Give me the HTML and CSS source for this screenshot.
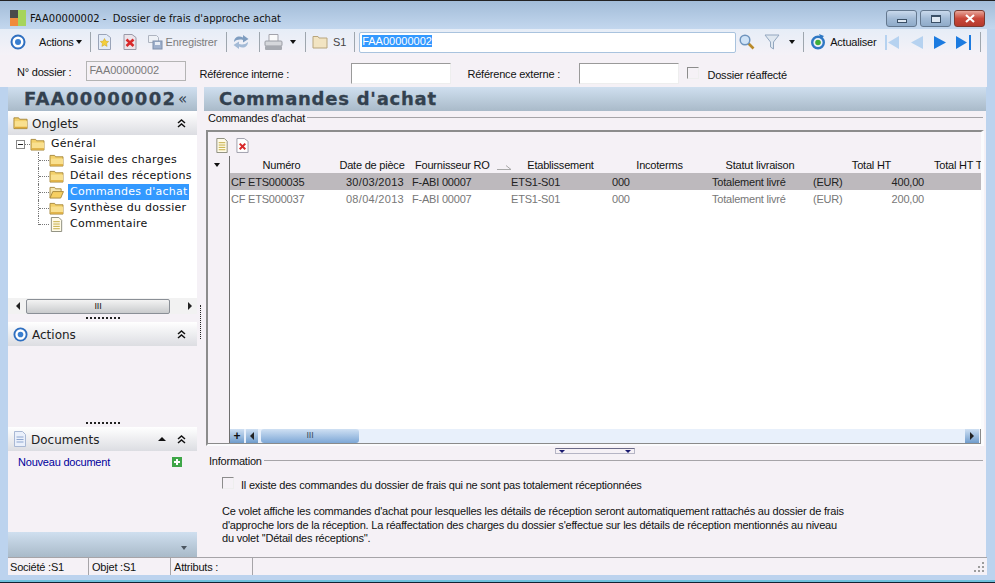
FILE: index.html
```html
<!DOCTYPE html>
<html lang="fr">
<head>
    <meta charset="UTF-8">
    <title>FAA00000002 - Dossier de frais d'approche achat</title>
    <link rel="stylesheet" href="styles.css">
</head>
<body>
    <svg class="defs" width="0" height="0">
        <symbol id="folder" viewBox="0 0 16 14">
            <path d="M1 3V1.500h5L7 3h8v10H1z" fill="#f3d06a" stroke="#a8893c"/>
            <path d="M2 5h13v7H2z" fill="#f9e08f"/>
            <path d="M2 11h13v1.500H2z" fill="#dca93a"/>
        </symbol>
        <symbol id="folder-open" viewBox="0 0 16 14">
            <path d="M1 13V1.500h5L7 3h6v3" fill="#f5e6b0" stroke="#a8893c"/>
            <path d="M1 13l3-7h11.500l-3 7z" fill="#f6cf62" stroke="#a8893c"/>
        </symbol>
        <symbol id="note" viewBox="0 0 14 16">
            <path d="M1.500.5h8l3 3v12h-11z" fill="#fffbe8" stroke="#8a8a7a"/>
            <path d="M3.500 5h7M3.500 7.500h7M3.500 10h7M3.500 12.500h7" stroke="#c2a93c"/>
        </symbol>
        <symbol id="target" viewBox="0 0 16 16">
            <circle cx="8" cy="8" r="6.500" fill="#fff" stroke="#2f6fc0" stroke-width="2"/>
            <circle cx="8" cy="8" r="3" fill="#3a7fd0"/>
        </symbol>
        <symbol id="chevrons" viewBox="0 0 9 9">
            <path d="M1 4l3.500-3L8 4M1 8l3.500-3L8 8" fill="none" stroke="#111" stroke-width="1.500"/>
        </symbol>
        <symbol id="nav-arrow" viewBox="0 0 14 15">
            <path d="M1 1l12 6.500L1 14z"/>
        </symbol>
    </svg>

    <div class="window">
        <div class="titlebar">
            <svg class="app-icon" width="16" height="16" viewBox="0 0 16 16">
                <rect width="8" height="8" fill="#4a4a4a"/>
                <rect x="8" width="8" height="16" fill="#a6d45c"/>
                <rect y="8" width="8" height="8" fill="#f08a3c"/>
            </svg>
            <span class="title-text">FAA00000002 -&nbsp; Dossier de frais d'approche achat</span>
            <div class="win-buttons">
                <span class="win-btn"><i class="glyph-min"></i></span>
                <span class="win-btn"><i class="glyph-max"></i></span>
                <span class="win-btn win-close">
                    <svg width="12" height="9" viewBox="0 0 12 9"><path d="M2 1l8 7M10 1L2 8" stroke="#fff" stroke-width="2.200"/></svg>
                </span>
            </div>
        </div>

        <div class="toolbar">
            <svg class="tb-target" width="16" height="16"><use href="#target"/></svg>
            <span class="tb-actions">Actions</span><i class="caret tb-actions-caret"></i>
            <i class="sep sep-1"></i>
            <svg class="tb-new" width="15" height="16" viewBox="0 0 15 16">
                <path d="M1.500.5h8l4 3v12h-12z" fill="#e4ecf8" stroke="#9aa4b8"/>
                <path d="M7.500 4.500l1.300 2.600 2.900.4-2.100 2 .5 2.900-2.600-1.400-2.600 1.400.5-2.900-2.100-2 2.900-.4z" fill="#f4cf3a" stroke="#c9a22a" stroke-width=".5"/>
            </svg>
            <svg class="tb-delete" width="14" height="16" viewBox="0 0 14 16">
                <path d="M1 .5h8l4 3v12H1z" fill="#ece4ea" stroke="#9a9aa8"/>
                <path d="M3.500 5.500l7 6.500M10.500 5.500l-7 6.500" stroke="#d8282a" stroke-width="2.600"/>
            </svg>
            <svg class="tb-save" width="15" height="16" viewBox="0 0 15 16">
                <path d="M.5 1.500h8l2 2v5h-10z" fill="#eef1f6" stroke="#aeb4c0"/>
                <rect x="5" y="7" width="9" height="8" fill="#9fb0cc" stroke="#7f90ac"/>
                <rect x="7" y="8" width="5" height="3" fill="#e8edf5"/>
            </svg>
            <span class="tb-disabled">Enregistrer</span>
            <i class="sep sep-2"></i>
            <svg class="tb-sync" width="16" height="16" viewBox="0 0 16 16">
                <path d="M1 8C1 3 6 1 10 3.500V1l5.500 4L10 8.500V6C7 5 3.500 5.500 1 8z" fill="#7f9dc0"/>
                <path d="M15 8c0 5-5 7-9 4.500V15L.5 11 6 7.500V10c3 1 6.500.5 9-2z" fill="#a3bad6"/>
            </svg>
            <i class="sep sep-3"></i>
            <svg class="tb-print" width="19" height="17" viewBox="0 0 19 17">
                <path d="M5 .5h9v7H5z" fill="#fafafa" stroke="#a3a3ab"/>
                <rect x="1" y="7" width="17" height="5" rx="1" fill="#d5d7db" stroke="#9a9da5"/>
                <rect x="1" y="12" width="17" height="4" rx="1" fill="#a7aab1"/>
            </svg>
            <i class="caret tb-print-caret"></i>
            <i class="sep sep-4"></i>
            <svg class="tb-folder" width="16" height="14" viewBox="0 0 16 14">
                <path d="M1 3V1.500h5L7 3h8v10H1z" fill="#f2e4c2" stroke="#b8a57c"/>
            </svg>
            <span class="tb-s1">S1</span>
            <i class="sep sep-5"></i>
            <div class="search-field"><span class="selected-text">FAA00000002</span></div>
            <svg class="tb-search" width="16" height="16" viewBox="0 0 16 16">
                <path d="M9.500 9.500l5 5" stroke="#b98a2a" stroke-width="2.600"/>
                <circle cx="6" cy="6" r="4.800" fill="#cfe3f7" stroke="#6f94bd" stroke-width="1.500"/>
            </svg>
            <svg class="tb-filter" width="16" height="16" viewBox="0 0 16 16">
                <path d="M1 1h14L9.500 8v7l-3-2V8z" fill="#dfe7f0" stroke="#93a7bf"/>
            </svg>
            <i class="caret tb-filter-caret"></i>
            <i class="sep sep-6"></i>
            <svg class="tb-refresh" width="16" height="16" viewBox="0 0 16 16">
                <circle cx="8" cy="8.500" r="5.800" fill="none" stroke="#2f78c4" stroke-width="2.400"/>
                <circle cx="8" cy="8.500" r="2.800" fill="#3fae3a"/>
                <path d="M9 0l5 2-3 3z" fill="#2f78c4"/>
            </svg>
            <span class="tb-refresh-label">Actualiser</span>
            <svg class="nav-btn nav-first nav-off" width="14" height="15" viewBox="0 0 14 15"><rect width="2" height="15"/><path d="M14 1L3 7.500 14 14z"/></svg>
            <svg class="nav-btn nav-prev nav-off" width="14" height="15" viewBox="0 0 14 15"><path d="M13 1L1 7.500 13 14z"/></svg>
            <svg class="nav-btn nav-next" width="14" height="15"><use href="#nav-arrow"/></svg>
            <svg class="nav-btn nav-last" width="15" height="15" viewBox="0 0 15 15"><path d="M0 1l11 6.500L0 14z"/><rect x="13" width="2" height="15"/></svg>
            <i class="sep sep-7"></i>
        </div>

        <div class="form-row">
            <label class="lbl-dossier">N° dossier :</label>
            <div class="field field-dossier">FAA00000002</div>
            <label class="lbl-interne">Référence interne :</label>
            <div class="field field-interne"></div>
            <label class="lbl-externe">Référence externe :</label>
            <div class="field field-externe"></div>
            <i class="check check-form"></i>
            <label class="lbl-check">Dossier réaffecté</label>
        </div>

        <div class="main">
            <aside class="sidebar">
                <div class="banner banner-side"><span>FAA00000002</span><em>«</em></div>

                <div class="panel-head">
                    <svg width="15" height="14"><use href="#folder"/></svg>
                    <span>Onglets</span>
                    <svg class="chev" width="9" height="9"><use href="#chevrons"/></svg>
                </div>
                <div class="tree">
                    <div class="tree-root">
                        <i class="expander"></i><i class="root-dash"></i>
                        <svg width="15" height="13"><use href="#folder"/></svg>
                        <span class="tree-label">Général</span>
                    </div>
                    <div class="tree-row"><i class="tree-line"></i><svg width="15" height="13"><use href="#folder"/></svg><span class="tree-label">Saisie des charges</span></div>
                    <div class="tree-row"><i class="tree-line"></i><svg width="15" height="13"><use href="#folder"/></svg><span class="tree-label">Détail des réceptions</span></div>
                    <div class="tree-row"><i class="tree-line"></i><svg width="15" height="13"><use href="#folder-open"/></svg><span class="tree-label tree-selected">Commandes d'achat</span></div>
                    <div class="tree-row"><i class="tree-line"></i><svg width="15" height="13"><use href="#folder"/></svg><span class="tree-label">Synthèse du dossier</span></div>
                    <div class="tree-row tree-row-last"><i class="tree-line"></i><svg width="15" height="15"><use href="#note"/></svg><span class="tree-label">Commentaire</span></div>
                </div>
                <div class="side-scroll">
                    <i class="arrow-left"></i>
                    <div class="side-thumb"><b>III</b></div>
                    <i class="arrow-right"></i>
                </div>
                <div class="grip"></div>

                <div class="panel-head">
                    <svg width="15" height="15"><use href="#target"/></svg>
                    <span>Actions</span>
                    <svg class="chev" width="9" height="9"><use href="#chevrons"/></svg>
                </div>
                <div class="actions-body"></div>
                <div class="grip grip-low"></div>

                <div class="panel-head">
                    <svg width="14" height="16" viewBox="0 0 14 16">
                        <path d="M1.500.5h8l3 3v12h-11z" fill="#eaf0fb" stroke="#a9b8d4"/>
                        <path d="M3.500 6h7M3.500 8.500h7M3.500 11h7" stroke="#8ea6cf"/>
                    </svg>
                    <span>Documents</span>
                    <i class="caret-up"></i>
                    <svg class="chev" width="9" height="9"><use href="#chevrons"/></svg>
                </div>
                <div class="documents-body">
                    <a class="doc-link">Nouveau document</a>
                    <svg width="10" height="10" viewBox="0 0 10 10">
                        <rect width="10" height="10" fill="#3fa648"/>
                        <path d="M5 2v6M2 5h6" stroke="#fff" stroke-width="2"/>
                    </svg>
                </div>
                <div class="side-footer"><i class="caret caret-grey"></i></div>
            </aside>

            <div class="v-split"><i></i></div>

            <section class="content">
                <div class="banner banner-main"><span>Commandes d'achat</span></div>
                <div class="group-title"><span>Commandes d'achat</span><i></i></div>

                <div class="grid-box">
                    <div class="grid-tools">
                        <svg width="14" height="15"><use href="#note"/></svg>
                        <svg width="13" height="15" viewBox="0 0 14 16">
                            <path d="M1 .5h8l4 3v12H1z" fill="#fff" stroke="#9a9aa8"/>
                            <path d="M4 6l6 6M10 6l-6 6" stroke="#d8282a" stroke-width="2.200"/>
                        </svg>
                    </div>
                    <div class="grid-body">
                        <div class="gutter">
                            <div class="gutter-head"><i class="caret"></i></div>
                        </div>
                        <div class="table">
                            <div class="cols cols-head">
                                <span class="c c-num">Numéro</span>
                                <span class="c">Date de pièce</span>
                                <span class="c c-fourn">Fournisseur RO<svg width="14" height="5" viewBox="0 0 14 5"><path d="M0 4.500h14L9 .5" fill="none" stroke="#a8a8a8"/></svg></span>
                                <span class="c c-etab">Etablissement</span>
                                <span class="c">Incoterms</span>
                                <span class="c">Statut livraison</span>
                                <span class="c c-total">Total HT</span>
                                <span class="c c-clip">Total HT T</span>
                            </div>
                            <div class="cols row-on">
                                <span class="first">CF ETS000035</span><span class="r">30/03/2013</span><span>F-ABI 00007</span><span>ETS1-S01</span><span>000</span><span>Totalement livré</span><span class="split"><b>(EUR)</b><b>400,00</b></span><span></span>
                            </div>
                            <div class="cols row-off">
                                <span class="first">CF ETS000037</span><span class="r">08/04/2013</span><span>F-ABI 00007</span><span>ETS1-S01</span><span>000</span><span>Totalement livré</span><span class="split"><b>(EUR)</b><b>200,00</b></span><span></span>
                            </div>
                            <div class="table-fill"></div>
                        </div>
                    </div>
                    <div class="grid-scroll">
                        <span class="gutter-fill"></span>
                        <span class="sb-btn sb-plus">+</span>
                        <span class="sb-btn sb-left"><i class="arrow-left"></i></span>
                        <div class="sb-thumb"><b>III</b></div>
                        <span class="sb-btn sb-right"><i class="arrow-right"></i></span>
                    </div>
                </div>

                <div class="h-split"><div class="h-split-bar"><i></i><i></i></div></div>

                <div class="group-title group-info"><span>Information</span><i></i></div>
                <div class="info-check"><i class="check"></i><span>Il existe des commandes du dossier de frais qui ne sont pas totalement réceptionnées</span></div>
                <p class="info-text">Ce volet affiche les commandes d'achat pour lesquelles les détails de réception seront automatiquement rattachés au dossier de frais<br>d'approche lors de la réception. La réaffectation des charges du dossier s'effectue sur les détails de réception mentionnés au niveau<br>du volet ''Détail des réceptions''.</p>
            </section>
        </div>

        <div class="statusbar">
            <span class="st st-1">Société :S1</span>
            <span class="st st-2">Objet :S1</span>
            <span class="st st-3">Attributs :</span>
            <svg class="resize-grip" width="11" height="11" viewBox="0 0 11 11">
                <path d="M8 0h2v2H8zM4 4h2v2H4zM8 4h2v2H8zM0 8h2v2H0zM4 8h2v2H4zM8 8h2v2H8z" fill="#9c9c9c"/>
            </svg>
        </div>
    </div>
</body>
</html>
```

FILE: styles.css
```css
* {
    box-sizing: border-box;
}
html, body {
    margin: 0;
    padding: 0;
    overflow: hidden;
}
body {
    font-family: "Liberation Sans", Arial, sans-serif;
    font-size: 11px;
    letter-spacing: -.21px;
    color: #111;
}
i, em, b {
    font-style: normal;
    font-weight: normal;
}
svg {
    display: block;
    flex: none;
}
.defs {
    position: absolute;
}

/* fenetre */
.window {
    width: 995px;
    height: 583px;
    display: flex;
    flex-direction: column;
    background: #bcd3ee;
    border-top: 1px solid #222;
    border-bottom: 1px solid #123;
    box-shadow: inset 0 -2px 0 #6fc0dc;
    padding: 0 9px 7px 8px;
}

/* barre de titre */
.titlebar {
    height: 28px;
    margin: 0 -9px 0 -8px;
    padding: 0 10px;
    display: flex;
    align-items: center;
    background: linear-gradient(#a2bcd8, #c3d7ee);
    flex: none;
}
.app-icon {
    margin-top: 6px;
}
.title-text {
    margin: 6px 0 0 4px;
    font-family: "DejaVu Sans", sans-serif;
    font-size: 10px;
    letter-spacing: 0;
    color: #111;
}
.win-buttons {
    margin: 7px 0 0 auto;
    display: flex;
    gap: 3px;
}
.win-btn {
    width: 31px;
    height: 17px;
    border: 1px solid #64788f;
    border-radius: 3px;
    background: linear-gradient(#c9d9ec, #a3bbd6 50%, #8fabc9);
    display: flex;
    align-items: center;
    justify-content: center;
}
.win-close {
    border-color: #7c3a30;
    background: linear-gradient(#e8a79b, #c9483a 50%, #b53a2d);
}
.glyph-min {
    width: 10px;
    height: 4px;
    margin-top: 5px;
    background: #dfe8f2;
    border: 1px solid #3a4f66;
}
.glyph-max {
    width: 10px;
    height: 8px;
    background: #dfe8f2;
    border: 1px solid #3a4f66;
    border-top-width: 2px;
}

/* barre d'outils */
.toolbar {
    height: 26px;
    margin: 0 -1px 0 -8px;
    padding-left: 10px;
    display: flex;
    align-items: center;
    background: linear-gradient(#e6edf7, #f5f2f7);
    flex: none;
}
.sep {
    width: 1px;
    height: 20px;
    background: #9ea6ae;
}
.caret {
    display: block;
    width: 0;
    height: 0;
    border-left: 3.500px solid transparent;
    border-right: 3.500px solid transparent;
    border-top: 4px solid #111;
}
.tb-actions { margin-left: 13px; }
.tb-actions-caret { margin-left: 2px; }
.sep-1 { margin-left: 8px; }
.tb-new { margin-left: 6px; }
.tb-delete { margin-left: 11px; }
.tb-save { margin-left: 11px; }
.tb-disabled { margin-left: 3px; color: #7c7c7c; }
.sep-2 { margin-left: 9px; }
.tb-sync { margin-left: 6px; }
.sep-3 { margin-left: 10px; }
.tb-print { margin-left: 4px; }
.tb-print-caret { margin-left: 7px; }
.sep-4 { margin-left: 9px; }
.tb-folder { margin-left: 6px; }
.tb-s1 { margin-left: 5px; color: #444; }
.sep-5 { margin-left: 8px; }
.search-field {
    width: 377px;
    height: 21px;
    margin-left: 4px;
    padding: 2px 0 0 2px;
    background: #fff;
    border: 1px solid #a9c3de;
    border-radius: 2px;
    letter-spacing: 0;
}
.selected-text {
    background: #3399ff;
    color: #fff;
}
.tb-search { margin-left: 3px; }
.tb-filter { margin-left: 9px; }
.tb-filter-caret { margin-left: 9px; }
.sep-6 { margin-left: 8px; }
.tb-refresh { margin-left: 6px; }
.tb-refresh-label { margin-left: 4px; }
.nav-btn { fill: #1c7be0; }
.nav-off { fill: #b6d2f0; }
.nav-first { margin-left: 9px; }
.nav-prev { margin-left: 11px; }
.nav-next { margin-left: 9px; }
.nav-last { margin-left: 9px; }
.sep-7 { margin-left: 9px; }

/* ligne de formulaire */
.form-row {
    height: 32px;
    margin: 0 -1px 0 -8px;
    display: flex;
    flex: none;
    background: #f5f1f6;
    align-items: flex-start;
}
.form-row label {
    line-height: 13px;
    white-space: nowrap;
}
.field {
    background: #fff;
    border: 1px solid #eee;
    border-top-color: #9a9a9a;
    border-left-color: #9a9a9a;
    height: 21px;
    width: 100px;
}
.lbl-dossier { margin: 11px 0 0 17px; }
.field-dossier {
    margin: 6px 0 0 15px;
    padding: 2px;
    height: 20px;
    background: #f5f1f6;
    border-color: #b4b4b4;
    color: #7a7a7a;
    letter-spacing: 0;
}
.lbl-interne { margin: 13px 0 0 13px; width: 152px; }
.field-interne { margin-top: 8px; }
.lbl-externe { margin: 13px 0 0 16px; width: 112px; }
.field-externe { margin-top: 8px; }
.check {
    display: block;
    width: 12px;
    height: 12px;
    background: #f5f1f6;
    border: 1px solid #eee;
    border-top-color: #8c8c8c;
    border-left-color: #8c8c8c;
    flex: none;
}
.check-form { margin: 12px 0 0 8px; }
.lbl-check { margin: 14px 0 0 8px; }

/* partie principale */
.main {
    flex: 1;
    display: flex;
    min-height: 0;
    background: #f5f1f6;
}
.banner {
    height: 24px;
    background: linear-gradient(#cfdfef, #a9bac9);
    font-family: "DejaVu Sans", sans-serif;
    font-weight: bold;
    font-size: 18px;
    line-height: 24px;
    color: #33414f;
    -webkit-text-stroke: .3px #33414f;
    display: flex;
    flex: none;
    white-space: nowrap;
}
.banner-side {
    padding-left: 16px;
    letter-spacing: 1.270px;
}
.banner-side span {
    width: 154px;
}
.banner-side em {
    font-weight: normal;
    font-size: 15px;
    letter-spacing: 0;
    -webkit-text-stroke: 0;
}
.banner-main {
    padding-left: 15px;
    letter-spacing: .760px;
}

/* colonne de gauche */
.sidebar {
    width: 189px;
    display: flex;
    flex-direction: column;
    flex: none;
}
.panel-head {
    height: 24px;
    display: flex;
    align-items: center;
    padding: 0 11px 0 5px;
    flex: none;
    background: linear-gradient(#fff, #dcdde2);
    font-family: "DejaVu Sans", sans-serif;
    font-size: 12px;
    letter-spacing: 0;
    color: #222;
}
.panel-head > span {
    margin: 2px 0 0 4px;
    flex: 1;
}
.chev { margin-left: 11px; }
.caret-up {
    width: 0;
    height: 0;
    border-left: 4px solid transparent;
    border-right: 4px solid transparent;
    border-bottom: 4px solid #111;
}
.tree {
    height: 163px;
    flex: none;
    background: #fff;
    padding: 1px 0 0 8px;
    font-family: "DejaVu Sans", sans-serif;
    font-size: 11px;
    letter-spacing: .25px;
}
.tree-root {
    height: 16px;
    display: flex;
    align-items: center;
}
.expander {
    width: 9px;
    height: 9px;
    border: 1px solid #888;
    background: linear-gradient(#222, #222) center / 5px 1px no-repeat #fff;
}
.root-dash {
    width: 5px;
    border-bottom: 1px dotted #777;
}
.tree-root .tree-label {
    margin-left: 4px;
}
.tree-row {
    height: 16px;
    display: flex;
    align-items: center;
    padding-left: 22px;
}
.tree-line {
    align-self: flex-start;
    width: 11px;
    height: 16px;
    flex: none;
    border-left: 1px dotted #777;
}
.tree-line::after {
    content: "";
    display: block;
    height: 8px;
    border-bottom: 1px dotted #777;
}
.tree-row-last .tree-line {
    height: 9px;
}
.tree-label {
    margin-left: 4px;
    padding: 0 2px;
    height: 16px;
    line-height: 15px;
    white-space: nowrap;
}
.tree-selected {
    background: #3399ff;
    color: #fff;
    width: 121px;
}
.side-scroll {
    height: 16px;
    display: flex;
    align-items: center;
    flex: none;
    background: #f2f2f2;
}
.arrow-left, .arrow-right {
    display: block;
    width: 0;
    height: 0;
    border-top: 4px solid transparent;
    border-bottom: 4px solid transparent;
    flex: none;
}
.arrow-left {
    border-right: 4px solid #222;
}
.arrow-right {
    border-left: 4px solid #222;
}
.side-scroll .arrow-left { margin-left: 8px; }
.side-scroll .arrow-right { margin-left: 18px; }
.side-thumb {
    width: 144px;
    height: 15px;
    margin-left: 6px;
    border: 1px solid #8a8f96;
    border-radius: 2px;
    background: linear-gradient(#f3f3f3, #c9cbcd);
    text-align: center;
    font-size: 9px;
    line-height: 13px;
}
.grip {
    height: 8px;
    flex: none;
    margin: 0 77px 0 78px;
    background: repeating-linear-gradient(90deg, #222 0 2px, transparent 2px 4px) center / 100% 2px no-repeat;
}
.grip-low {
    height: 9px;
}
.actions-body {
    height: 72px;
    flex: none;
}
.documents-body {
    flex: 1;
    display: flex;
    align-items: flex-start;
    justify-content: space-between;
    padding: 5px 15px 0 10px;
}
.doc-link {
    color: #00009c;
}
.documents-body svg {
    margin-top: 1px;
}
.side-footer {
    height: 25px;
    flex: none;
    background: linear-gradient(#cfdfef, #a9bac9);
    display: flex;
    justify-content: flex-end;
    align-items: center;
    padding: 6px 10px 0 0;
}
.caret-grey {
    border-top-color: #4c5660;
}
.v-split {
    width: 7px;
    flex: none;
    padding: 218px 0 0 3px;
}
.v-split i {
    display: block;
    height: 34px;
    width: 1px;
    border-left: 1px dotted #222;
}

/* contenu */
.content {
    flex: 1;
    display: flex;
    flex-direction: column;
    min-width: 0;
}
.group-title {
    display: flex;
    align-items: center;
    gap: 2px;
    height: 13px;
    margin: 0 3px 0 4px;
    flex: none;
}
.group-title i {
    flex: 1;
    height: 1px;
    background: #a6a4a8;
}
.grid-box {
    height: 316px;
    margin: 6px 2px 0 2px;
    border-top: 2px solid #8c8c8c;
    border-left: 2px solid #8c8c8c;
    border-right: 3px solid #fbfbfd;
    border-bottom: 2px solid #fbfbfd;
    display: flex;
    flex-direction: column;
    flex: none;
}
.grid-tools {
    height: 24px;
    display: flex;
    align-items: center;
    gap: 7px;
    padding: 2px 0 0 7px;
    flex: none;
}
.grid-body {
    flex: 1;
    display: flex;
    min-height: 0;
}
.gutter {
    width: 22px;
    border-right: 1px solid #6e6e6e;
    flex: none;
}
.gutter-head {
    height: 17px;
    padding: 7px 0 0 6px;
}
.table {
    flex: 1;
    min-width: 0;
    display: flex;
    flex-direction: column;
    overflow: hidden;
}
.cols {
    display: grid;
    grid-template-columns: 103px 75px 99px 101px 100px 101px 119px 54px;
    height: 17px;
    line-height: 16px;
    flex: none;
}
.cols > span {
    padding: 1px 0 0 4px;
    white-space: nowrap;
    overflow: hidden;
}
.cols > .first {
    padding-left: 1px;
}
.cols-head .c {
    text-align: center;
    padding: 1px 0 0 3px;
}
.cols-head .c-num {
    padding-left: 0;
}
.cols-head .c-etab {
    padding-left: 6px;
}
.cols-head .c-fourn {
    display: flex;
    align-items: center;
    padding-left: 7px;
    overflow: visible;
}
.c-fourn svg {
    margin: 4px 0 0 7px;
}
.cols-head .c-total {
    padding-left: 6px;
}
.cols-head .c-clip {
    text-align: left;
    padding-left: 6px;
}
.cols .r {
    text-align: right;
    padding: 1px 4px 0 0;
    letter-spacing: .3px;
}
.cols .split {
    display: flex;
    justify-content: space-between;
    padding: 1px 4px 0 4px;
}
.row-on {
    background: #bdb9bd;
    color: #222;
}
.row-off {
    background: #fff;
    color: #777;
}
.table-fill {
    flex: 1;
    background: #fff;
}
.grid-scroll {
    height: 15px;
    display: flex;
    align-items: stretch;
    flex: none;
    background: #e8f0fb;
    border-bottom: 1px solid #8a8a8a;
    border-right: 1px solid #8a8a8a;
}
.gutter-fill {
    width: 22px;
    background: #f5f1f6;
    border-right: 1px solid #6e6e6e;
}
.sb-btn {
    width: 14px;
    display: flex;
    align-items: center;
    justify-content: center;
    background: linear-gradient(#cfe0f3, #6f9ccc);
    flex: none;
}
.sb-plus {
    font-size: 12px;
    font-weight: bold;
    line-height: 12px;
}
.sb-left {
    margin-left: 2px;
    width: 12px;
}
.sb-thumb {
    width: 98px;
    margin-left: 3px;
    background: linear-gradient(#cfe0f3, #7da7d6);
    border-radius: 3px;
    text-align: center;
    font-size: 9px;
    line-height: 13px;
    color: #3c4c5c;
}
.sb-right {
    margin-left: auto;
    margin-right: 1px;
}
.h-split {
    height: 8px;
    display: flex;
    justify-content: center;
    padding-top: 2px;
    flex: none;
}
.h-split-bar {
    width: 80px;
    height: 6px;
    border: 1px solid #b5b5c5;
    border-top-color: #6a6a88;
    display: flex;
    justify-content: space-between;
    padding: 0 3px;
}
.h-split-bar i {
    width: 0;
    height: 0;
    border-left: 3px solid transparent;
    border-right: 3px solid transparent;
    border-top: 3px solid #1a1a70;
    margin-top: 1px;
}
.group-info {
    margin: 0 3px 0 5px;
}
.info-check {
    display: flex;
    align-items: flex-start;
    gap: 7px;
    margin: 10px 0 0 18px;
    line-height: 13px;
}
.info-check span {
    margin-top: 2px;
}
.info-text {
    margin: 13px 0 0 18px;
    white-space: nowrap;
    line-height: 13.500px;
}

/* barre d'etat */
.statusbar {
    height: 18px;
    margin: 0 -1px 0 0;
    display: flex;
    align-items: center;
    flex: none;
    background: #f5f1f6;
    border-top: 1px solid #a6a4a8;
}
.st {
    height: 100%;
    padding: 3px 0 0 2px;
    border-right: 1px solid #a6a4a8;
    white-space: nowrap;
}
.st-1 { width: 81px; }
.st-2 { width: 82px; padding-left: 3px; }
.st-3 { width: 82px; padding-left: 3px; }
.resize-grip {
    margin: 2px 2px 0 auto;
}
```
